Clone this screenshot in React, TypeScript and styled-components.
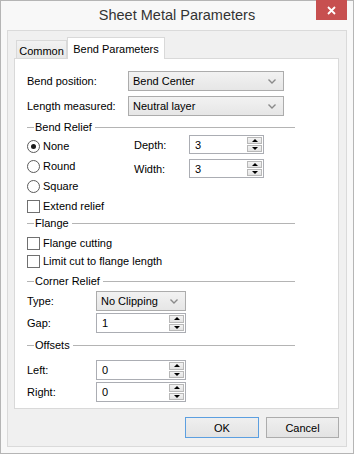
import React from "react"
import styled, { createGlobalStyle } from "styled-components"

const GlobalStyle = createGlobalStyle`
  html, body {
    margin: 0;
    padding: 0;
    background: #fff;
  }
  body {
    font-family: "Liberation Sans", Arial, sans-serif;
    font-size: 11px;
    color: #000;
  }
  * {
    box-sizing: border-box;
  }
`

const Window = styled.div`
  width: 354px;
  height: 454px;
  border: 1px solid #b5b5b5;
  background: #f8f8f8;
  padding: 0 6px 6px;
  display: flex;
  flex-direction: column;
`

const TitleBar = styled.div`
  height: 29px;
  display: grid;
  grid-template-columns: 1fr auto 1fr;
`

const Title = styled.div`
  grid-column: 2;
  align-self: center;
  margin-top: -1px;
  font-size: 14.5px;
  color: #333;
`

const CloseButton = styled.div`
  grid-column: 3;
  justify-self: end;
  width: 31px;
  height: 20px;
  margin-top: -1px;
  background: #c75050;
  display: flex;
  align-items: center;
  justify-content: center;
`

const Client = styled.div`
  flex: 1;
  display: flex;
  flex-direction: column;
  border: 1px solid #dadada;
  background: #f0f0f0;
  padding: 6px 7px 0 6px;
`

const TabStrip = styled.div`
  height: 22px;
  display: flex;
  align-items: flex-end;
  padding-left: 2px;
  margin-bottom: -1px;
  position: relative;
  z-index: 1;
`

const Tab = styled.div<{ $active?: boolean }>`
  display: flex;
  align-items: center;
  justify-content: center;
  border: 1px solid #d9d9d9;
  border-bottom: none;
  width: ${p => (p.$active ? 98 : 51)}px;
  height: ${p => (p.$active ? 22 : 18)}px;
  margin-bottom: ${p => (p.$active ? 0 : 1)}px;
  padding-top: ${p => (p.$active ? 0 : 2)}px;
  background: ${p => (p.$active ? "#fff" : "linear-gradient(#f2f2f2, #e8e8e8)")};
`

const Panel = styled.div`
  height: 351px;
  border: 1px solid #d9d9d9;
  background: #fff;
  padding: 12px 43px 0 12px;
  display: flex;
  flex-direction: column;
`

const Row = styled.div<{ $label: number; $top: number; $h?: number }>`
  display: grid;
  grid-template-columns: ${p => p.$label}px auto;
  align-items: center;
  margin-top: ${p => p.$top}px;
  height: ${p => p.$h ?? 20}px;
`

const GroupHeader = styled.div<{ $top: number }>`
  display: flex;
  align-items: center;
  height: 14px;
  margin-top: ${p => p.$top}px;
  &::before {
    content: "";
    width: 7px;
    height: 1px;
    background: #b4b4b4;
    margin-right: 1px;
  }
  &::after {
    content: "";
    flex: 1;
    height: 1px;
    background: #b4b4b4;
    margin-left: 3px;
  }
`

const SelectBox = styled.div<{ $w: number }>`
  width: ${p => p.$w}px;
  height: 20px;
  border: 1px solid #acacac;
  background: linear-gradient(#f2f2f2, #e6e6e6);
  display: flex;
  align-items: center;
  justify-content: space-between;
  padding: 0 7px 0 4px;
`

const SpinBox = styled.div<{ $w: number; $h?: number }>`
  width: ${p => p.$w}px;
  height: ${p => p.$h ?? 20}px;
  border: 1px solid #abadb3;
  background: #fff;
  display: flex;
  align-items: center;
  justify-content: space-between;
  padding: 1px 1px 1px 5px;
`

const SpinButtons = styled.div`
  align-self: stretch;
  width: 15px;
  display: flex;
  flex-direction: column;
  gap: 1px;
`

const SpinHalf = styled.div<{ $down?: boolean }>`
  flex: 1;
  border: 1px solid #b8b8b8;
  background: linear-gradient(#f3f3f3, #e3e3e3);
  display: flex;
  align-items: center;
  justify-content: center;
  &::after {
    content: "";
    border-left: 3px solid transparent;
    border-right: 3px solid transparent;
    ${p => (p.$down ? "border-top: 3px solid #000;" : "border-bottom: 3px solid #000;")}
  }
`

const ReliefBlock = styled.div`
  display: flex;
  margin-top: 2px;
`

const RadioColumn = styled.div`
  width: 107px;
  display: flex;
  flex-direction: column;
`

const SizeGrid = styled.div`
  display: grid;
  grid-template-columns: 55px 75px;
  align-items: center;
  row-gap: 5px;
  margin-top: -1px;
  height: 43px;
`

const Choice = styled.div<{ $h: number; $top?: number }>`
  display: flex;
  align-items: center;
  gap: 3px;
  height: ${p => p.$h}px;
  margin-top: ${p => p.$top ?? 0}px;
`

const RadioMark = styled.span<{ $on?: boolean }>`
  width: 13px;
  height: 13px;
  border-radius: 50%;
  border: 1px solid #5a5a5a;
  background: #fff;
  display: flex;
  align-items: center;
  justify-content: center;
  &::after {
    content: "";
    width: 5px;
    height: 5px;
    border-radius: 50%;
    background: ${p => (p.$on ? "#1a1a1a" : "transparent")};
  }
`

const CheckMark = styled.span`
  width: 13px;
  height: 13px;
  border: 1px solid #707070;
  background: #fff;
`

const ButtonRow = styled.div`
  display: flex;
  justify-content: flex-end;
  gap: 7px;
  margin-top: 8px;
`

const DialogButton = styled.div<{ $default?: boolean; $w: number }>`
  width: ${p => p.$w}px;
  height: 21px;
  border: 1px solid ${p => (p.$default ? "#5c9fe0" : "#acacac")};
  background: linear-gradient(#efefef, #e3e3e3);
  display: flex;
  align-items: center;
  justify-content: center;
`

function Chevron() {
  return (
    <svg width="8" height="5" viewBox="0 0 8 5">
      <polyline points="0.5,0.5 4,4 7.5,0.5" fill="none" stroke="#8a8a8a" strokeWidth="1.4" />
    </svg>
  )
}

function Select({ value, width }: { value: string; width: number }) {
  return (
    <SelectBox $w={width}>
      <span>{value}</span>
      <Chevron />
    </SelectBox>
  )
}

function Spin({ value, width, height }: { value: string; width: number; height?: number }) {
  return (
    <SpinBox $w={width} $h={height}>
      <span>{value}</span>
      <SpinButtons>
        <SpinHalf />
        <SpinHalf $down />
      </SpinButtons>
    </SpinBox>
  )
}

export default function App() {
  return (
    <>
      <GlobalStyle />
      <Window>
        <TitleBar>
          <Title>Sheet Metal Parameters</Title>
          <CloseButton>
            <svg width="9" height="9" viewBox="0 0 9 9">
              <path d="M1 1 L8 8 M8 1 L1 8" stroke="#fff" strokeWidth="1.8" />
            </svg>
          </CloseButton>
        </TitleBar>
        <Client>
          <TabStrip>
            <Tab>Common</Tab>
            <Tab $active>Bend Parameters</Tab>
          </TabStrip>
          <Panel>
            <Row $label={101} $top={0}>
              <span>Bend position:</span>
              <Select value="Bend Center" width={156} />
            </Row>
            <Row $label={101} $top={5}>
              <span>Length measured:</span>
              <Select value="Neutral layer" width={156} />
            </Row>

            <GroupHeader $top={4}>Bend Relief</GroupHeader>
            <ReliefBlock>
              <RadioColumn>
                <Choice $h={20}>
                  <RadioMark $on />
                  None
                </Choice>
                <Choice $h={20}>
                  <RadioMark />
                  Round
                </Choice>
                <Choice $h={20}>
                  <RadioMark />
                  Square
                </Choice>
              </RadioColumn>
              <SizeGrid>
                <span>Depth:</span>
                <Spin value="3" width={75} height={19} />
                <span>Width:</span>
                <Spin value="3" width={75} height={19} />
              </SizeGrid>
            </ReliefBlock>
            <Choice $h={20}>
              <CheckMark />
              Extend relief
            </Choice>

            <GroupHeader $top={0}>Flange</GroupHeader>
            <Choice $h={18} $top={4}>
              <CheckMark />
              Flange cutting
            </Choice>
            <Choice $h={18}>
              <CheckMark />
              Limit cut to flange length
            </Choice>

            <GroupHeader $top={4}>Corner Relief</GroupHeader>
            <Row $label={69} $top={3}>
              <span>Type:</span>
              <Select value="No Clipping" width={90} />
            </Row>
            <Row $label={69} $top={2}>
              <span>Gap:</span>
              <Spin value="1" width={90} />
            </Row>

            <GroupHeader $top={5}>Offsets</GroupHeader>
            <Row $label={69} $top={8}>
              <span>Left:</span>
              <Spin value="0" width={90} />
            </Row>
            <Row $label={69} $top={2}>
              <span>Right:</span>
              <Spin value="0" width={90} />
            </Row>
          </Panel>
          <ButtonRow>
            <DialogButton $default $w={74}>
              OK
            </DialogButton>
            <DialogButton $w={73}>Cancel</DialogButton>
          </ButtonRow>
        </Client>
      </Window>
    </>
  )
}
